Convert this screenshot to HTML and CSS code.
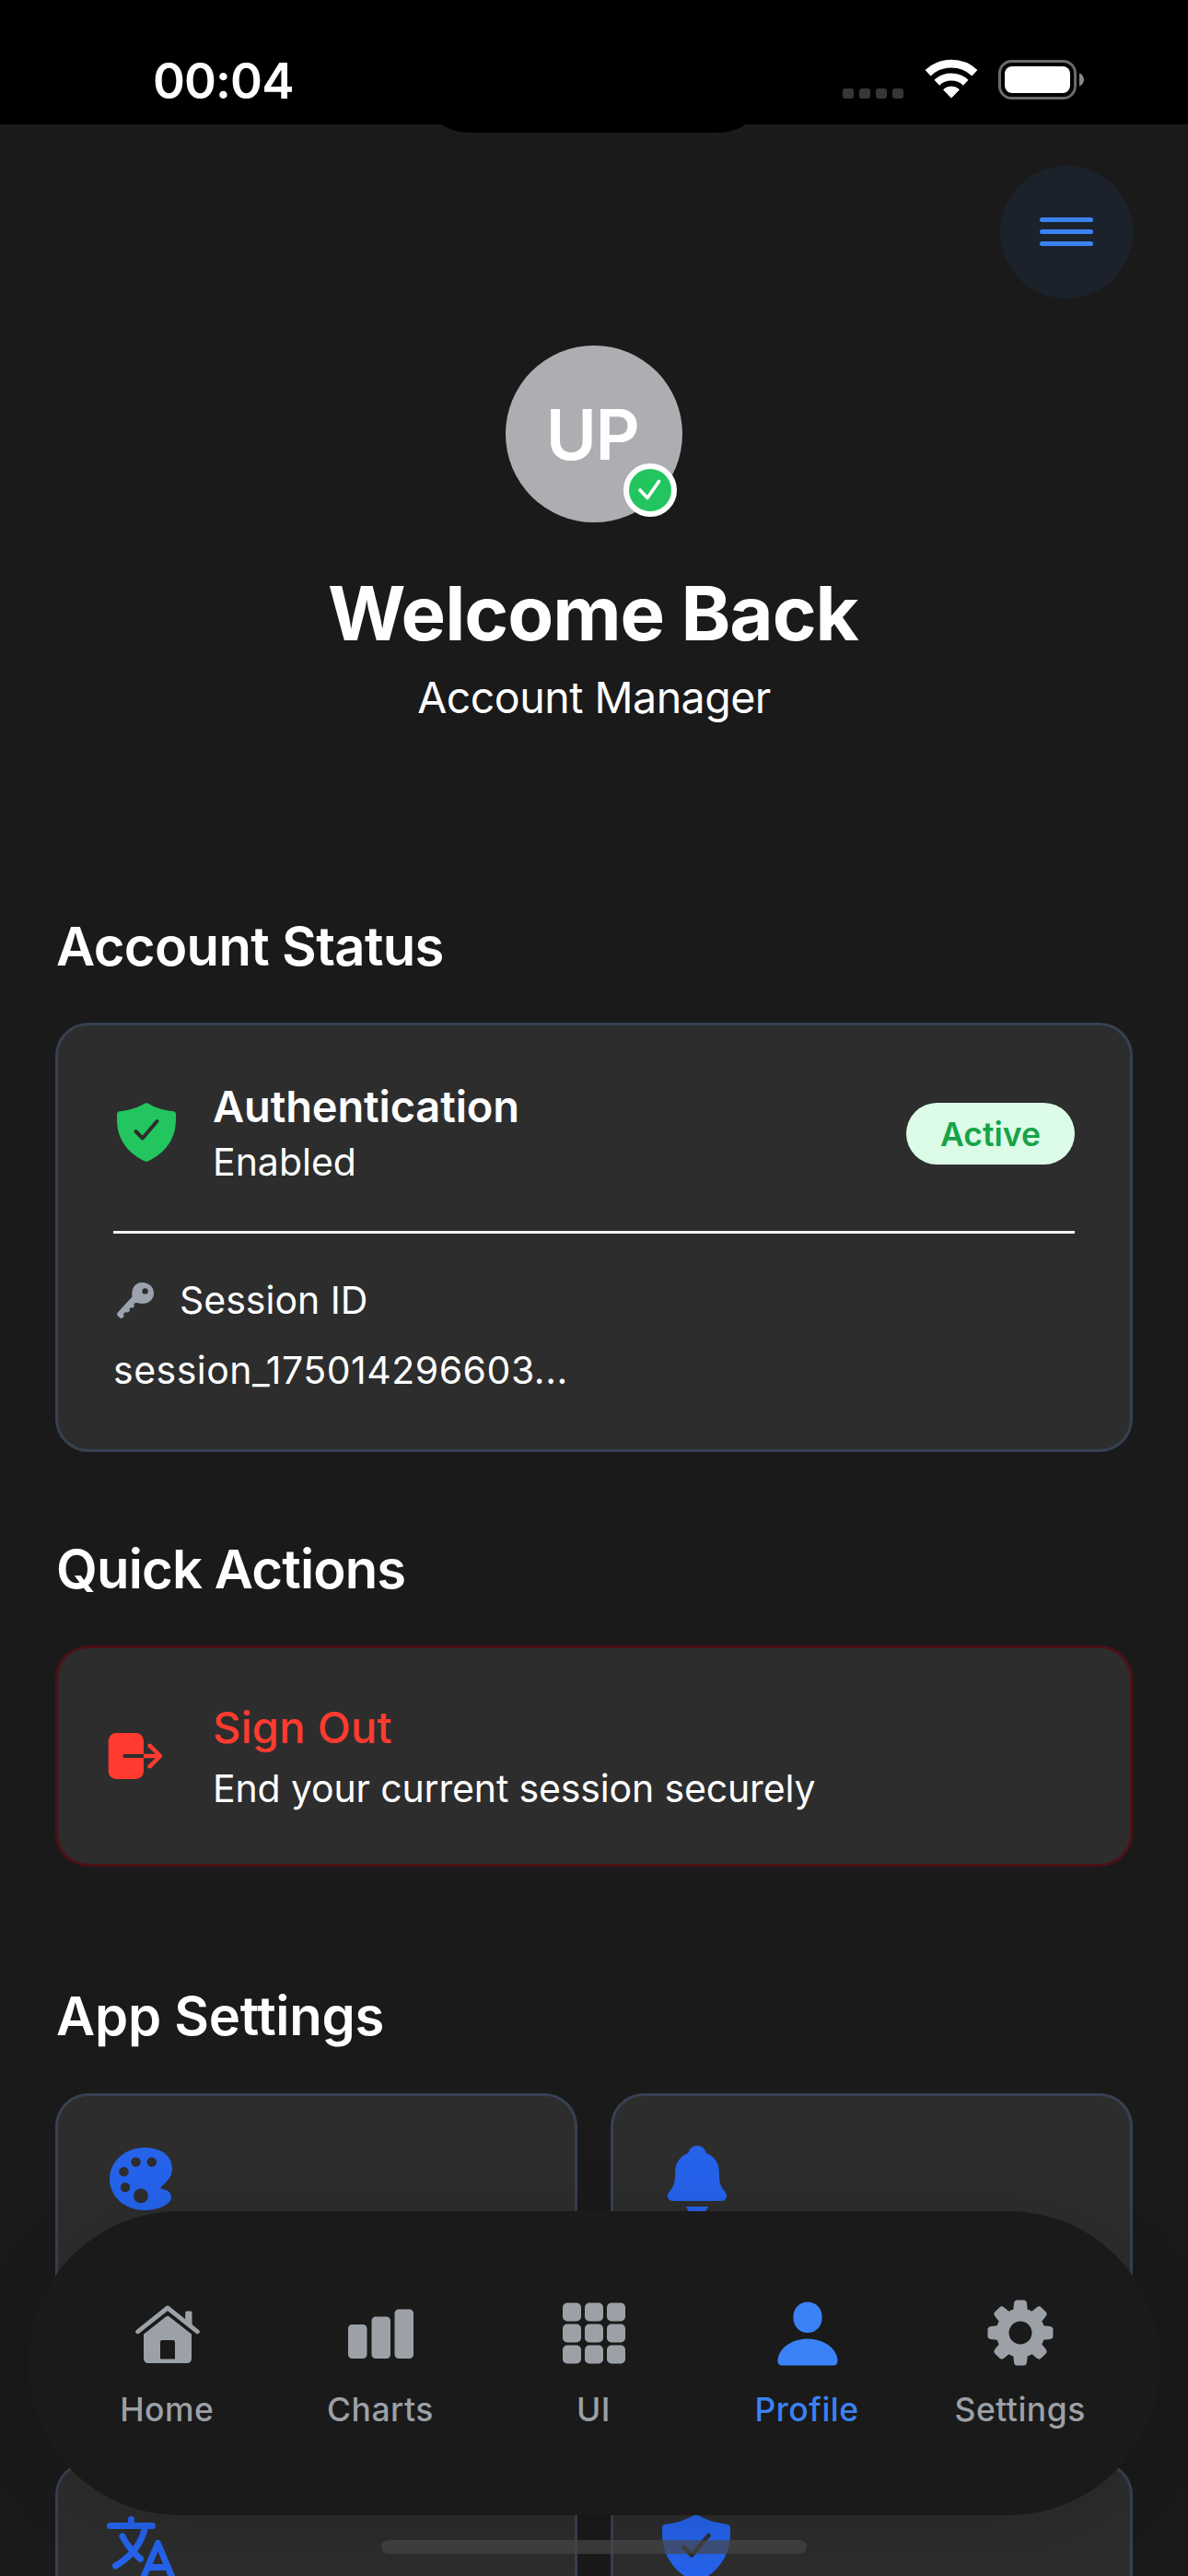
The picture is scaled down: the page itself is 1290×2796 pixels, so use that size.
FILE: index.html
```html
<!DOCTYPE html>
<html lang="en">
<head>
<meta charset="utf-8">
<title>Profile</title>
<link rel="stylesheet" href="styles.css">
</head>
<body>
<div class="screen">
  <header class="status-bar">
    <span class="clock">00:04</span>
    <div class="island"></div>
    <div class="indicators">
      <div class="signal"><i></i><i></i><i></i><i></i></div>
      <svg class="wifi" viewBox="0 0 58 42" fill="none" stroke="#fff"><path d="M3.600 14.200A37.300 37.300 0 0 1 54.400 14.200" stroke-width="8.700"/><path d="M13.300 24.700A23 23 0 0 1 44.700 24.700" stroke-width="8.200"/><path d="M29 41L20.600 32.300A12.600 12.600 0 0 1 37.400 32.300Z" fill="#fff" stroke-width="1" stroke-linejoin="round"/></svg>
      <svg class="battery" viewBox="0 0 94 43"><rect x="1.500" y="1.500" width="82" height="40" rx="13" fill="none" stroke="#6b6b6b" stroke-width="3"/><rect x="7" y="7" width="71" height="29" rx="8" fill="#fff"/><path d="M88 14.500C91 15.500 93 18.300 93 21.500S91 27.500 88 28.500Z" fill="#8a8a8a"/></svg>
    </div>
  </header>

  <main class="content">
    <div class="toolbar">
      <button class="menu" aria-label="Menu"><span></span><span></span><span></span></button>
    </div>

    <section class="hero">
      <div class="avatar">
        <span>UP</span>
        <div class="verified"><svg viewBox="0 0 46 46"><path d="M12 23L20 31.500L32.500 13.500" fill="none" stroke="#fff" stroke-width="3.600" stroke-linecap="round" stroke-linejoin="round"/></svg></div>
      </div>
      <h1>Welcome Back</h1>
      <p>Account Manager</p>
    </section>

    <section class="block status">
      <h2>Account Status</h2>
      <div class="card status-card">
        <div class="auth">
          <svg class="shield" viewBox="0 0 64 64"><path d="M30 .8Q32-.4 34 .8C42 5.500 50 8 61 9.300Q64 9.700 64 12.500V18C64 39 53 54 34 63.300Q32 64.300 30 63.300C11 54 0 39 0 18V12.500Q0 9.700 3 9.300C14 8 22 5.500 30 .8Z" fill="#22c55e"/><path d="M20.500 31L27.800 38.500L43.500 20" fill="none" stroke="#2d2d2d" stroke-width="4" stroke-linecap="round" stroke-linejoin="round"/></svg>
          <div class="auth-text">
            <strong>Authentication</strong>
            <span class="sub">Enabled</span>
          </div>
          <span class="pill">Active</span>
        </div>
        <div class="session">
          <div class="session-head">
            <svg class="key" viewBox="0 0 40 39"><path fill-rule="evenodd" d="M27.500 0C34.500 0 40 5 40 11.700S34.500 23 27.700 23C25.500 23 23.500 22.500 21.600 22L19.500 22.200L18.600 23.300L18.700 25.800L17.700 27.400L15 27.200L13.700 28.600L13.800 30.800L12.500 32.200L8.500 32.500L7.200 34L7.500 36.700L6 38.500Q4.500 39.800 3 38.300L.7 36Q-.8 34.500.6 32.800L16.500 15.500C15.200 7.500 19 0 27.500 0ZM30.600 6.200A3.200 3.200 0 1 0 30.600 12.600A3.200 3.200 0 1 0 30.600 6.200Z" fill="#9ca3af"/></svg>
            <span>Session ID</span>
          </div>
          <div class="session-id">session_175014296603...</div>
        </div>
      </div>
    </section>

    <section class="block actions">
      <h2>Quick Actions</h2>
      <div class="card action-card">
        <svg class="exit" viewBox="0 0 60 50"><rect x=".7" width="38.300" height="50" rx="8.500" fill="#ff3b30"/><path d="M18.500 25H37" stroke="#2d2d2d" stroke-width="4.200" stroke-linecap="round"/><path d="M35 25H39" stroke="#2d2d2d" stroke-width="4.200"/><path d="M39 25H57M45.500 13.500L57 25L45.500 36.500" fill="none" stroke="#ff3b30" stroke-width="4.400" stroke-linecap="butt" stroke-linejoin="round"/><circle cx="45.500" cy="13.700" r="2.200" fill="#ff3b30"/><circle cx="45.500" cy="36.300" r="2.200" fill="#ff3b30"/></svg>
        <div class="action-text">
          <strong class="danger">Sign Out</strong>
          <span class="sub">End your current session securely</span>
        </div>
      </div>
    </section>

    <section class="block settings">
      <h2>App Settings</h2>
      <div class="grid">
        <div class="card tile">
          <svg class="palette" viewBox="0 0 68 68"><path fill-rule="evenodd" d="M38 0C56 0 68 9 68 23C68 33 61 38 56.500 42C54.500 44 56 45 59 45.500C64 46.500 67 49.500 67 54C67 61 54 68 38 68C16 68 0 52.500 0 34C0 15 17 0 38 0ZM28.500 10.500a5.200 5.200 0 1 0 .01 0ZM45.800 10.500a5.200 5.200 0 1 0 .01 0ZM15.500 21a5.200 5.200 0 1 0 .01 0ZM17 38a5.200 5.200 0 1 0 .01 0ZM34 44.500a7.900 7.900 0 1 0 .01 0Z" fill="#2563eb"/></svg>
        </div>
        <div class="card tile">
          <svg class="bell" viewBox="0 0 64 76" fill="#2563eb"><path d="M32 0C37 0 40.500 3.200 41.700 8C50 11 55.500 18.500 55.800 27C56 37 56 43 62 49.500C66 54 64 60 58 60H6C0 60-2 54 2 49.500C8 43 8 37 8.200 27C8.500 18.500 14 11 22.300 8C23.500 3.200 27 0 32 0Z"/><path d="M20 66H44C42 71 38 75 32 75S22 71 20 66Z"/></svg>
        </div>
        <div class="card tile">
          <svg class="translate" viewBox="0 0 74 76" fill="none" stroke="#2563eb" stroke-width="7" stroke-linecap="round" stroke-linejoin="round"><path d="M3.500 12.500H49.500M26.500 5.500V12M41.500 14C38 31 28 45 9.500 56M17 24C22 34 29 42 36.500 48.500M39 70L55.500 31.500L71.500 70M45 57.500H66"/></svg>
        </div>
        <div class="card tile">
          <svg class="shield-lg" viewBox="0 0 64 64"><path d="M30 .8Q32-.4 34 .8C42 5.500 50 8 61 9.300Q64 9.700 64 12.500V18C64 39 53 54 34 63.300Q32 64.300 30 63.300C11 54 0 39 0 18V12.500Q0 9.700 3 9.300C14 8 22 5.500 30 .8Z" fill="#2563eb"/><path d="M20.500 31L27.800 38.500L43.500 20" fill="none" stroke="#2d2d2d" stroke-width="4" stroke-linecap="round" stroke-linejoin="round"/></svg>
        </div>
      </div>
    </section>
  </main>

  <nav class="tabs">
    <a class="tab"><svg viewBox="0 0 72 72" fill="currentColor"><path d="M3.500 34.800L36 9L68.500 34.800" fill="none" stroke="currentColor" stroke-width="4.800" stroke-linecap="round" stroke-linejoin="round"/><path d="M55.200 23V14Q55.200 12.500 56.700 12.500H61Q62.500 12.500 62.500 14V29Z"/><path fill-rule="evenodd" d="M10 37.500L34.500 18.300Q36 17 37.500 18.300L62 37.500V63.500Q62 69 56.500 69H15.500Q10 69 10 63.500ZM28 46V64.500H44V46Q44 44 42 44H30Q28 44 28 46Z"/></svg><span>Home</span></a>
    <a class="tab"><svg viewBox="0 0 72 72" fill="currentColor"><rect x="1" y="27" width="20.500" height="37" rx="4.500"/><rect x="26.500" y="18.500" width="20.500" height="45.500" rx="4.500"/><rect x="51.500" y="10.500" width="20.500" height="53.500" rx="4.500"/></svg><span>Charts</span></a>
    <a class="tab"><svg viewBox="0 0 72 72" fill="currentColor"><rect x="2" y="3.500" width="20" height="20" rx="5"/><rect x="26" y="3.500" width="20" height="20" rx="5"/><rect x="50" y="3.500" width="20" height="20" rx="5"/><rect x="2" y="26.500" width="20" height="20" rx="5"/><rect x="26" y="26.500" width="20" height="20" rx="5"/><rect x="50" y="26.500" width="20" height="20" rx="5"/><rect x="2" y="49.500" width="20" height="20" rx="5"/><rect x="26" y="49.500" width="20" height="20" rx="5"/><rect x="50" y="49.500" width="20" height="20" rx="5"/></svg><span>UI</span></a>
    <a class="tab active"><svg viewBox="0 0 72 72" fill="currentColor"><rect x="20.500" y="2.500" width="31" height="33.500" rx="15.500"/><path d="M36 42.500C53 42.500 68.500 53 68.500 66.500Q68.500 71.500 63.500 71.500H8.500Q3.500 71.500 3.500 66.500C3.500 53 19 42.500 36 42.500Z"/></svg><span>Profile</span></a>
    <a class="tab"><svg viewBox="0 0 72 72" fill="currentColor"><defs><path id="tooth" d="M25 18L28.300 11L29 4Q29.500 .5 32.500 .5H39.500Q42.500 .5 43 4L43.700 11L47 18Z"/></defs><circle cx="36" cy="36" r="19.500" fill="none" stroke="currentColor" stroke-width="14"/><use href="#tooth"/><use href="#tooth" transform="rotate(45 36 36)"/><use href="#tooth" transform="rotate(90 36 36)"/><use href="#tooth" transform="rotate(135 36 36)"/><use href="#tooth" transform="rotate(180 36 36)"/><use href="#tooth" transform="rotate(225 36 36)"/><use href="#tooth" transform="rotate(270 36 36)"/><use href="#tooth" transform="rotate(315 36 36)"/></svg><span>Settings</span></a>
  </nav>
  <div class="home-bar"></div>
</div>
</body>
</html>
```
FILE: styles.css
```css
* { box-sizing: border-box; margin: 0; padding: 0; }
body { background: #1a1a1a; }
.screen {
  position: relative; width: 1290px; height: 2796px; overflow: hidden;
  background: #1a1a1a; color: #fff;
  font-family: Inter, "Liberation Sans", sans-serif;
}
svg { display: block; flex: none; overflow: visible; }
strong, .sub, .tab { white-space: nowrap; }

.status-bar {
  position: relative; height: 135px; background: #000;
  display: flex; justify-content: space-between; align-items: flex-start;
  padding: 65px 112px 0 166px;
}
.clock { font-size: 53px; line-height: 46px; font-weight: 600; letter-spacing: -0.9px; }
.island {
  position: absolute; left: 454px; top: 33px; width: 381px; height: 111px;
  border-radius: 56px; background: #000;
}
.indicators { display: flex; align-items: flex-start; }
.signal { display: flex; gap: 6px; padding-top: 31px; margin-right: 23px; }
.signal i { width: 12px; height: 11px; border-radius: 3px; background: #363636; }
.wifi { width: 58px; height: 42px; margin-right: 22px; }
.battery { width: 94px; height: 43px; }

.toolbar { display: flex; justify-content: flex-end; padding: 45px 60px 0; }
.menu {
  width: 144px; height: 144px; border: 0; border-radius: 50%; padding-bottom: 1px;
  background: #1c222c; display: flex; flex-direction: column;
  align-items: center; justify-content: center; gap: 8px;
}
.menu span { width: 58px; height: 5px; border-radius: 3px; background: #3b82f6; }

.hero { display: flex; flex-direction: column; align-items: center; padding-top: 51px; }
.avatar {
  position: relative; width: 192px; height: 192px; border-radius: 50%;
  background: #aeadb2; display: flex; align-items: center; justify-content: center;
  font-size: 75px; font-weight: 600; line-height: 90px; letter-spacing: -1.5px;
  padding: 2px 4px 0 0;
}
.verified {
  position: absolute; right: 6px; bottom: 6px; width: 58px; height: 58px;
  border: 6px solid #fff; border-radius: 50%; background: #22c55e;
}
h1 { font-size: 81.5px; line-height: 100px; font-weight: 700; margin-top: 49px; letter-spacing: -1px; padding-right: 2px; }
.hero p { font-size: 46.5px; line-height: 60px; margin-top: 11px; letter-spacing: -0.5px; }

.block { padding: 0 60px; }
h2 { font-size: 58px; line-height: 72px; font-weight: 600; padding-left: 1px; letter-spacing: -0.65px; }
.actions h2 { letter-spacing: -0.85px; }
.settings h2 { letter-spacing: -0.25px; }
.status { padding-top: 204px; }
.card { border: 3px solid #374151; border-radius: 36px; background: #2d2d2d; }
.status-card { margin-top: 47px; height: 466px; padding: 60px; }
.auth {
  display: flex; align-items: center; height: 166px; padding: 0 0 48px 4px;
  border-bottom: 3px solid #f3f4f6;
}
.shield { width: 64px; height: 64px; margin-bottom: 3px; }
.auth-text { margin-left: 40px; flex: 1; }
strong { display: block; font-size: 47px; line-height: 60px; font-weight: 600; letter-spacing: -0.15px; }
.sub { display: block; font-size: 41px; line-height: 58px; margin-top: 1px; }
.pill {
  width: 183px; height: 67px; border-radius: 34px; background: #dcfce7; color: #16a34a;
  display: flex; align-items: center; justify-content: center; padding-top: 1px;
  font-size: 35.5px; font-weight: 600;
}
.session { font-size: 41px; }
.session-head { display: flex; align-items: center; gap: 28px; height: 58px; margin-top: 43px; padding-left: 4px; }
.key { width: 40px; height: 39px; }
.session-id { line-height: 58px; margin-top: 18px; letter-spacing: 0.5px; }

.actions { padding-top: 91px; }
.action-card {
  margin-top: 47px; height: 240px; border-color: #4d1115;
  display: flex; align-items: center; padding: 0 54px;
}
.exit { width: 60px; height: 50px; margin-right: 54px; }
.action-text { padding-top: 2px; }
.action-card .sub { margin-top: 7px; letter-spacing: -0.15px; }
.action-card .danger { color: #ff3b30; font-weight: 500; letter-spacing: 0.3px; }

.settings { padding-top: 126px; }
.grid { margin-top: 48px; display: grid; grid-template-columns: 1fr 1fr; gap: 36px; }
.tile { height: 364px; padding: 54px 56px; }
.palette { width: 68px; height: 68px; margin-top: 2px; }
.bell { width: 64px; height: 76px; margin-left: 3px; }
.translate { width: 74px; height: 76px; margin-left: -3px; }
.shield-lg { width: 74px; height: 74px; margin-left: -3px; }

.tabs {
  position: absolute; left: 30px; top: 2400px; width: 1230px; height: 330px;
  border-radius: 165px; background: #1a1a1a; padding: 96px 36px 0;
  display: flex; box-shadow: 0 12px 72px rgba(0, 0, 0, .15);
}
.tab {
  flex: 1; display: flex; flex-direction: column; align-items: center;
  color: #9ba1a6; font-size: 35.5px; line-height: 46px; font-weight: 500; letter-spacing: 0.5px;
}
.tab svg { width: 72px; height: 72px; margin-bottom: 25px; }
.tab span { padding-right: 1px; }
.tab.active { color: #3b82f6; }
.home-bar {
  position: absolute; left: 414px; top: 2757px; width: 462px; height: 15px;
  border-radius: 8px; background: rgba(70, 70, 70, .7);
}
```
